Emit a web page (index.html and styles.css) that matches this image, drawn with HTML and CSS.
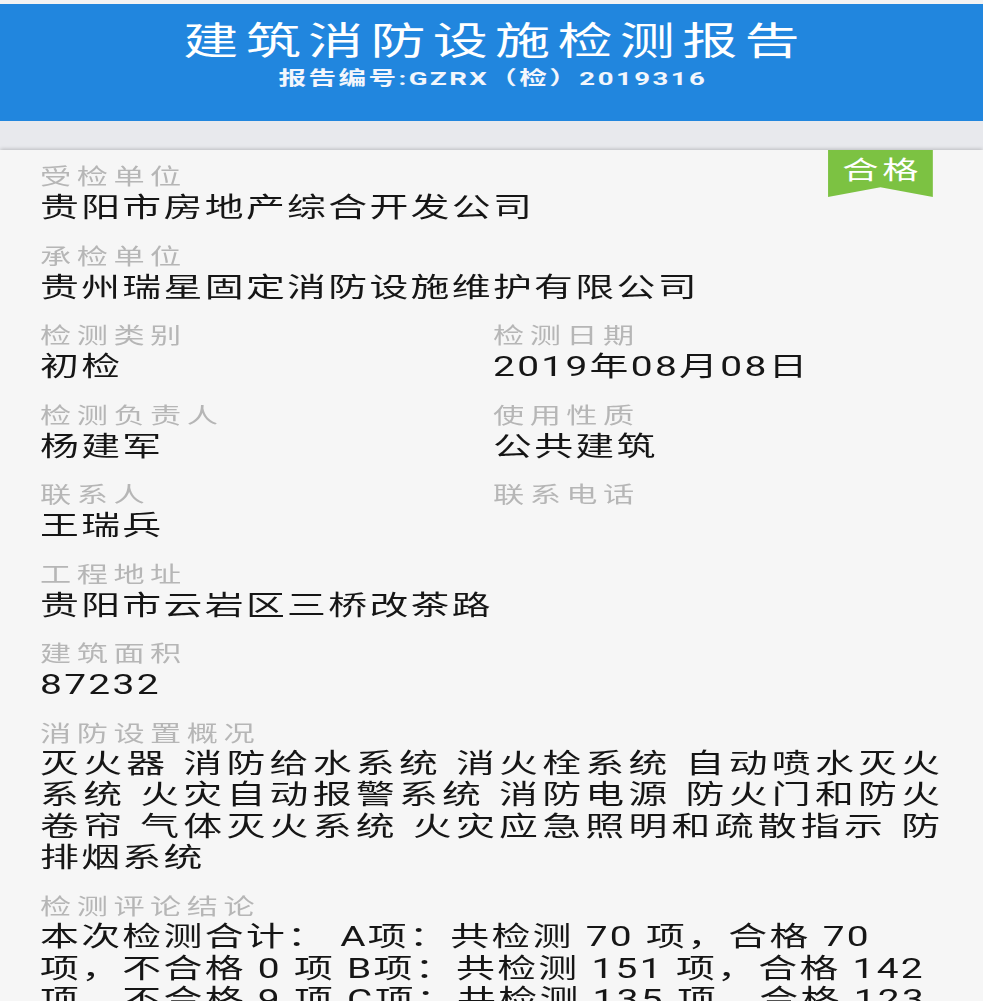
FILE: index.html
```html
<!DOCTYPE html>
<html lang="zh-CN">
<head>
<meta charset="utf-8">
<title>建筑消防设施检测报告</title>
<link rel="stylesheet" href="styles.css">
</head>
<body>
<div class="page">
  <header class="hero">
    <h1 class="hero-title">建筑消防设施检测报告</h1>
    <p class="hero-sub">报告编号:GZRX（检）2019316</p>
  </header>
  <div class="band"></div>
  <main class="sheet">
    <div class="badge">合格</div>
    <div class="fields">
      <div class="field wide">
        <div class="label">受检单位</div>
        <div class="value">贵阳市房地产综合开发公司</div>
      </div>
      <div class="field wide">
        <div class="label">承检单位</div>
        <div class="value">贵州瑞星固定消防设施维护有限公司</div>
      </div>
      <div class="field">
        <div class="label">检测类别</div>
        <div class="value">初检</div>
      </div>
      <div class="field">
        <div class="label">检测日期</div>
        <div class="value">2019年08月08日</div>
      </div>
      <div class="field">
        <div class="label">检测负责人</div>
        <div class="value">杨建军</div>
      </div>
      <div class="field">
        <div class="label">使用性质</div>
        <div class="value">公共建筑</div>
      </div>
      <div class="field">
        <div class="label">联系人</div>
        <div class="value">王瑞兵</div>
      </div>
      <div class="field">
        <div class="label">联系电话</div>
        <div class="value"></div>
      </div>
      <div class="field wide">
        <div class="label">工程地址</div>
        <div class="value">贵阳市云岩区三桥改茶路</div>
      </div>
      <div class="field wide">
        <div class="label">建筑面积</div>
        <div class="value">87232</div>
      </div>
      <div class="field wide">
        <div class="label">消防设置概况</div>
        <div class="value para">
          <span class="line just">灭火器 消防给水系统 消火栓系统 自动喷水灭火</span>
          <span class="line just">系统 火灾自动报警系统 消防电源 防火门和防火</span>
          <span class="line just">卷帘 气体灭火系统 火灾应急照明和疏散指示 防</span>
          <span class="line">排烟系统</span>
        </div>
      </div>
      <div class="field wide">
        <div class="label">检测评论结论</div>
        <div class="value para">
          <span class="line">本次检测合计： A项：共检测 70 项，合格 70</span>
          <span class="line">项，不合格 0 项 B项：共检测 151 项，合格 142</span>
          <span class="line">项，不合格 9 项 C项：共检测 135 项，合格 123</span>
        </div>
      </div>
    </div>
  </main>
</div>
</body>
</html>
```

FILE: styles.css
```css
html, body {
  margin: 0;
  padding: 0;
  overflow: hidden;
  background: #f6f6f6;
}

.page {
  width: 677.9px;
  transform: scaleX(1.45);
  transform-origin: 0 0;
  font-family: Roboto, "Noto Sans CJK SC", sans-serif;
}

.hero {
  border-top: 4px solid #f3f3f3;
  background: #2186de;
  height: 117px;
  text-align: center;
  color: #fff;
  overflow: hidden;
}

.hero-title {
  margin: 14px 0 0;
  padding-left: 5px;
  font-family: Roboto, "Noto Sans CJK SC", sans-serif;
  font-size: 38px;
  font-weight: 400;
  line-height: 46px;
  letter-spacing: 5px;
}

.hero-sub {
  margin: 2px 0 0;
  padding-left: 2px;
  font-family: Roboto, "Noto Sans CJK SC", sans-serif;
  font-size: 19px;
  font-weight: 700;
  line-height: 26px;
  letter-spacing: 1.7px;
  color: #f2f6fc;
}

.band {
  height: 29px;
  background: #e8e9ed;
}

.sheet {
  position: relative;
  padding: 15px 28px 40px 27.6px;
  background: #f6f6f6;
  box-shadow: 0 -1px 3px rgba(0, 0, 0, 0.2);
}

.badge {
  position: absolute;
  top: 0;
  right: 34.5px;
  width: 72.4px;
  height: 47px;
  background: #7cc242;
  clip-path: polygon(0 0, 100% 0, 100% 100%, 50% 79%, 0 100%);
  color: #fff;
  font-family: Roboto, "Noto Sans CJK SC", sans-serif;
  font-size: 25px;
  line-height: 42px;
  letter-spacing: 2.5px;
  text-indent: 2.5px;
  text-align: center;
}

.fields {
  display: grid;
  grid-template-columns: 312.4px 1fr;
  row-gap: 20.5px;
}

.field.wide {
  grid-column: 1 / -1;
}

.label {
  font-size: 21.5px;
  line-height: 23px;
  letter-spacing: 3.8px;
  color: #b6b6b6;
}

.value {
  min-height: 32px;
  padding-top: 4px;
  font-size: 26.8px;
  font-weight: 400;
  line-height: 32px;
  letter-spacing: 1.6px;
  color: #161616;
}

.para {
  line-height: 31.5px;
}

.line {
  display: block;
  white-space: nowrap;
}

.line.just {
  white-space: normal;
  text-align: justify;
  text-align-last: justify;
}
```
